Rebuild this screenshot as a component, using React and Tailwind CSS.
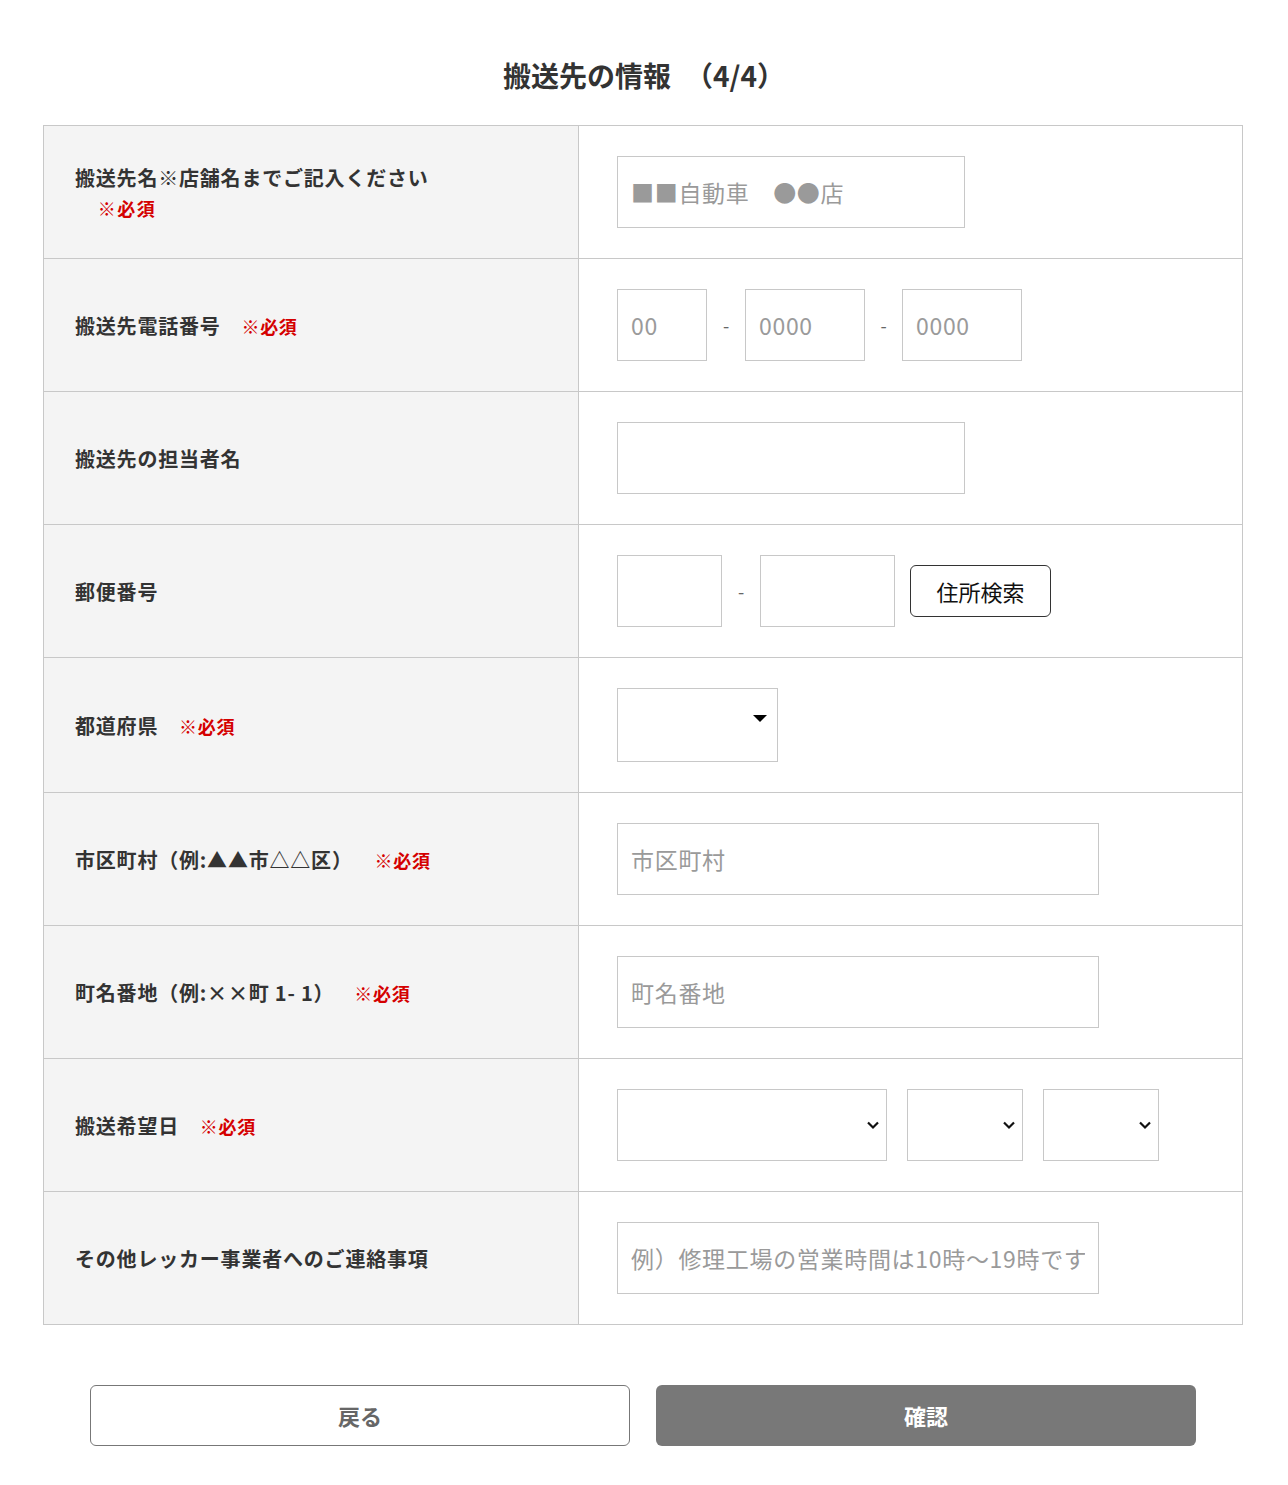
import React from "react";

const Req = ({ className = "" }) => (
  <span className={`text-[18px] tracking-[0.04em] text-[#d40000] ${className}`}>※必須</span>
);

const Row = ({ label, children, last }) => (
  <div className={`grid grid-cols-[535px_1fr] ${last ? "" : "border-b border-[#c8c8c8]"}`}>
    <div className="flex items-center bg-[#f4f4f4] border-r border-[#c8c8c8] pl-[31px] pr-[20px] pt-[2px] text-[20px] leading-[30px] font-bold tracking-[0.04em] text-[#333]">
      <div>{label}</div>
    </div>
    <div className="flex items-center py-[30px] pl-[38px]">{children}</div>
  </div>
);

const Input = ({ w, placeholder }) => (
  <input
    type="text"
    placeholder={placeholder}
    className={`${w} h-[72px] border border-[#c8c8c8] bg-white px-[13px] text-[23px] tracking-[0.03em] text-[#333] placeholder:text-[#9a9a9a] outline-none`}
  />
);

const Dash = ({ w }) => <span className={`${w} text-center text-[18px] text-[#666]`}>-</span>;

const Chevron = () => (
  <svg width="14" height="10" viewBox="0 0 14 10" className="absolute right-[7px] top-1/2 -translate-y-1/2 pointer-events-none">
    <path d="M2 2.5 L7 7.5 L12 2.5" fill="none" stroke="#111" strokeWidth="2.2" />
  </svg>
);

const Select = ({ w, arrow }) => (
  <div className={`relative ${w}`}>
    <select className={`appearance-none w-full ${arrow === "tri" ? "h-[74px]" : "h-[72px]"} border border-[#c8c8c8] bg-white outline-none`}>
      <option></option>
    </select>
    {arrow === "tri" ? (
      <svg width="14" height="8" viewBox="0 0 14 8" className="absolute right-[11px] top-[27px] pointer-events-none">
        <path d="M0 0 H14 L7 7 Z" fill="#000" />
      </svg>
    ) : (
      <Chevron />
    )}
  </div>
);

export default function App() {
  return (
    <div className="min-h-[1485px] bg-white pt-[54px] font-['Noto_Sans_CJK_JP','Noto_Sans',sans-serif]">
      <h1 className="text-center text-[28px] leading-[42px] font-bold text-[#333] mb-[29px]">搬送先の情報　（4/4）</h1>

      <div className="w-[1200px] ml-[43px] border border-[#c8c8c8]">
        <Row label={<>搬送先名※店舗名までご記入ください<br />　<Req className="ml-[2px] tracking-[0.08em]" /></>}>
          <Input w="w-[348px]" placeholder="■■自動車　●●店" />
        </Row>
        <Row label={<>搬送先電話番号　<Req /></>}>
          <Input w="w-[90px]" placeholder="00" />
          <Dash w="w-[38px]" />
          <Input w="w-[120px]" placeholder="0000" />
          <Dash w="w-[37px]" />
          <Input w="w-[120px]" placeholder="0000" />
        </Row>
        <Row label="搬送先の担当者名">
          <Input w="w-[348px]" />
        </Row>
        <Row label="郵便番号">
          <Input w="w-[105px]" />
          <Dash w="w-[38px]" />
          <Input w="w-[135px]" />
          <button className="ml-[15px] w-[141px] h-[52px] rounded-[6px] border border-[#333] bg-white text-[22px] text-[#111]">住所検索</button>
        </Row>
        <Row label={<>都道府県　<Req /></>}>
          <Select w="w-[161px]" arrow="tri" />
        </Row>
        <Row label={<>市区町村（例:▲▲市△△区）　<Req className="ml-[11px]" /></>}>
          <Input w="w-[482px]" placeholder="市区町村" />
        </Row>
        <Row label={<>町名番地（例:××町 1- 1）　<Req className="ml-[9px]" /></>}>
          <Input w="w-[482px]" placeholder="町名番地" />
        </Row>
        <Row label={<>搬送希望日　<Req /></>}>
          <div className="flex gap-[20px]">
            <Select w="w-[270px]" />
            <Select w="w-[116px]" />
            <Select w="w-[116px]" />
          </div>
        </Row>
        <Row label="その他レッカー事業者へのご連絡事項" last>
          <Input w="w-[482px]" placeholder="例）修理工場の営業時間は10時〜19時です" />
        </Row>
      </div>

      <div className="flex gap-[26px] ml-[90px] mt-[60px]">
        <button className="w-[540px] h-[61px] rounded-[6px] border border-[#777] bg-white text-[22px] font-bold text-[#666]">戻る</button>
        <button className="w-[540px] h-[61px] rounded-[6px] bg-[#787878] text-[22px] font-bold text-white">確認</button>
      </div>
    </div>
  );
}
